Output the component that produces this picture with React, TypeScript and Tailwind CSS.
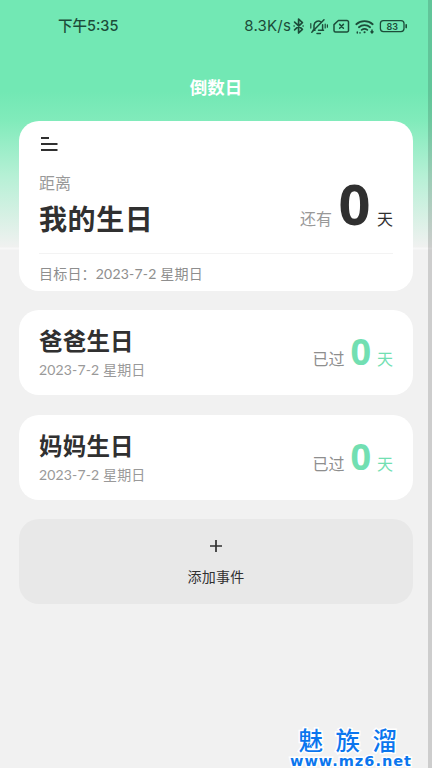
import { clsx } from "clsx";

type CountdownEvent = {
  title: string;
  date: string;
  days: number;
};

const events: CountdownEvent[] = [
  { title: "爸爸生日", date: "2023-7-2 星期日", days: 0 },
  { title: "妈妈生日", date: "2023-7-2 星期日", days: 0 }
];

const cjk = "font-['Noto_Sans_CJK_SC',sans-serif]";
const mixed = "font-['Lato','Noto_Sans_CJK_SC',sans-serif]";

function StatusIcons() {
  return (
    <svg
      width="118"
      height="20"
      viewBox="0 0 118 20"
      fill="none"
      stroke="#1c4c39"
      strokeWidth="1.5"
      strokeLinecap="round"
      strokeLinejoin="round"
    >
      {/* bluetooth */}
      <path d="M3.6 6.2 11.4 13.4 7.6 17V3l3.8 3.6-7.8 7.2" strokeWidth="1.7" />
      <path d="M3 10h.2M12 10h.2" />
      {/* muted bell */}
      <path d="M22 14.3h2M23 14V9.2a4.4 4.4 0 0 1 7-3.2M31.6 8.8V14M27.5 14.3h5" />
      <path d="M20.8 16.2 33 3.8M26 17.4h3.4" />
      <path d="M19.8 7.5v4.6M34.2 8v4M36.4 8.8v2.4" strokeWidth="1.2" />
      {/* empty sim */}
      <path d="M47.4 4.5H56a1.5 1.5 0 0 1 1.5 1.5v8.5A1.5 1.5 0 0 1 56 16H44.5a1.5 1.5 0 0 1-1.5-1.5V8.6Z" />
      <path d="m48.6 8.4 3.8 3.8M52.4 8.4l-3.8 3.8" />
      {/* wifi */}
      <path
        d="M65.3 8.2a12.6 12.6 0 0 1 16.4 0M67.9 11.2a8.6 8.6 0 0 1 11.2 0M70.7 13.9a4.6 4.6 0 0 1 5.6 0"
        strokeWidth="1.8"
      />
      <path d="M73.5 16.2h.1" strokeWidth="2" />
      <path d="M66.3 16v.9M69 16.8v.1M81 14v3M80 15.8l1 1.2 1-1.2" strokeWidth="1.5" />
      {/* battery */}
      <rect x="89.4" y="4.6" width="23.6" height="11" rx="3" strokeWidth="1.3" />
      <path d="M115.2 8.8v2.8" strokeWidth="1.6" />
      <text
        x="101.2"
        y="13.6"
        textAnchor="middle"
        fontFamily="Inter, sans-serif"
        fontSize="9"
        fontWeight="600"
        fill="#1c4c39"
        stroke="none"
      >
        83
      </text>
    </svg>
  );
}

function StatusBar() {
  return (
    <div className="flex h-[52px] items-center justify-between pr-[23px] pl-[58px] text-[#1c4c39]">
      <span className="font-['Inter','Noto_Sans_CJK_SC',sans-serif] text-[14.5px] leading-5 font-medium">
        下午5:35
      </span>
      <div className="flex items-center">
        <span className="font-['Inter',sans-serif] text-[15px] leading-5 tracking-[0.2px]">8.3K/s</span>
        <StatusIcons />
      </div>
    </div>
  );
}

function MainCard() {
  return (
    <section className="mx-[19px] h-[170px] rounded-[20px] bg-white px-5 pt-[15px]">
      <svg width="20" height="16" viewBox="0 0 20 16" stroke="#303030" strokeWidth="2.2">
        <path d="M2 2h8M2 8h16.5M2 14h16.5" />
      </svg>
      <div className="flex h-[102px] justify-between border-b border-[#f3f3f3]">
        <div className={cjk}>
          <p className="mt-[18px] text-[16px] leading-6 text-[#999]">距离</p>
          <h2 className="mt-[4px] text-[28px] leading-[40px] font-bold tracking-[0.6px] text-[#303030]">
            我的生日
          </h2>
        </div>
        <div className={clsx(cjk, "flex items-baseline self-end pb-[12px] text-[#303030]")}>
          <span className="text-[16px] text-[#999]">还有</span>
          <span className="mx-[6.5px] font-['Noto_Sans',sans-serif] text-[56px] leading-[76px] font-bold">
            0
          </span>
          <span className="text-[16px]">天</span>
        </div>
      </div>
      <p className={clsx(mixed, "mt-[10px] text-[14px] leading-5 tracking-[0.2px] text-[#8e8e8e]")}>
        目标日：2023-7-2 星期日
      </p>
    </section>
  );
}

function EventCard({ title, date, days }: CountdownEvent) {
  return (
    <section className="mx-[19px] flex h-[85px] justify-between rounded-[20px] bg-white px-5">
      <div className="pt-[13px]">
        <h3 className={clsx(cjk, "text-[23.5px] leading-[34px] font-bold tracking-[0.2px] text-[#303030]")}>
          {title}
        </h3>
        <p className={clsx(mixed, "mt-[3px] text-[14px] leading-5 tracking-[0.15px] text-[#999]")}>{date}</p>
      </div>
      <div className={clsx(cjk, "flex items-baseline pt-[17px] text-[16px] text-[#72dfb2]")}>
        <span className="text-[#8e8e8e]">已过</span>
        <span className="mx-[6px] font-['Noto_Sans',sans-serif] text-[36px] leading-[50px] font-bold">
          {days}
        </span>
        <span>天</span>
      </div>
    </section>
  );
}

function Watermark() {
  return (
    <div className="absolute right-[17px] bottom-0 flex w-[128px] flex-col items-center text-[#0b76ee] [-webkit-text-stroke:3px_white] [paint-order:stroke]">
      <p className={clsx(cjk, "pl-[6px] text-[24.5px] leading-[28px] font-medium tracking-[12.5px]")}>魅族溜</p>
      <p className="font-['DejaVu_Sans',sans-serif] text-[14.5px] leading-[14px] font-bold tracking-[1px]">
        www.mz6.net
      </p>
    </div>
  );
}

export default function App() {
  return (
    <div className="relative h-[768px] w-[432px] overflow-hidden bg-[#f1f1f1]">
      <div className="h-full bg-[linear-gradient(to_bottom,#72e8b4_0px,#72e8b4_92px,#81ebbb_121px,#b5f0d5_175px,#f0f1f0_247px,#f7f7f7_248px,#f7f7f7_249px,#f1f1f1_250px)]">
        <StatusBar />
        <header className="flex h-[69px] items-center justify-center">
          <h1 className={clsx(cjk, "text-[17.5px] leading-6 font-bold text-white")}>倒数日</h1>
        </header>
        <main className="flex flex-col gap-[19.3px]">
          <MainCard />
          {events.map((event) => (
            <EventCard key={event.title} {...event} />
          ))}
          <button
            type="button"
            className="mx-[19px] flex h-[85px] flex-col items-center rounded-[20px] bg-[#e8e8e8] pt-[20px] text-[#303030]"
          >
            <svg width="14" height="14" viewBox="0 0 14 14" stroke="currentColor" strokeWidth="1.7">
              <path d="M7 1v12M1 7h12" />
            </svg>
            <span className={clsx(cjk, "mt-[13px] text-[14px] leading-5 tracking-[0.2px]")}>添加事件</span>
          </button>
        </main>
      </div>
      <Watermark />
      <div className="absolute inset-y-0 right-0 w-[4px] bg-black/15" />
    </div>
  );
}
